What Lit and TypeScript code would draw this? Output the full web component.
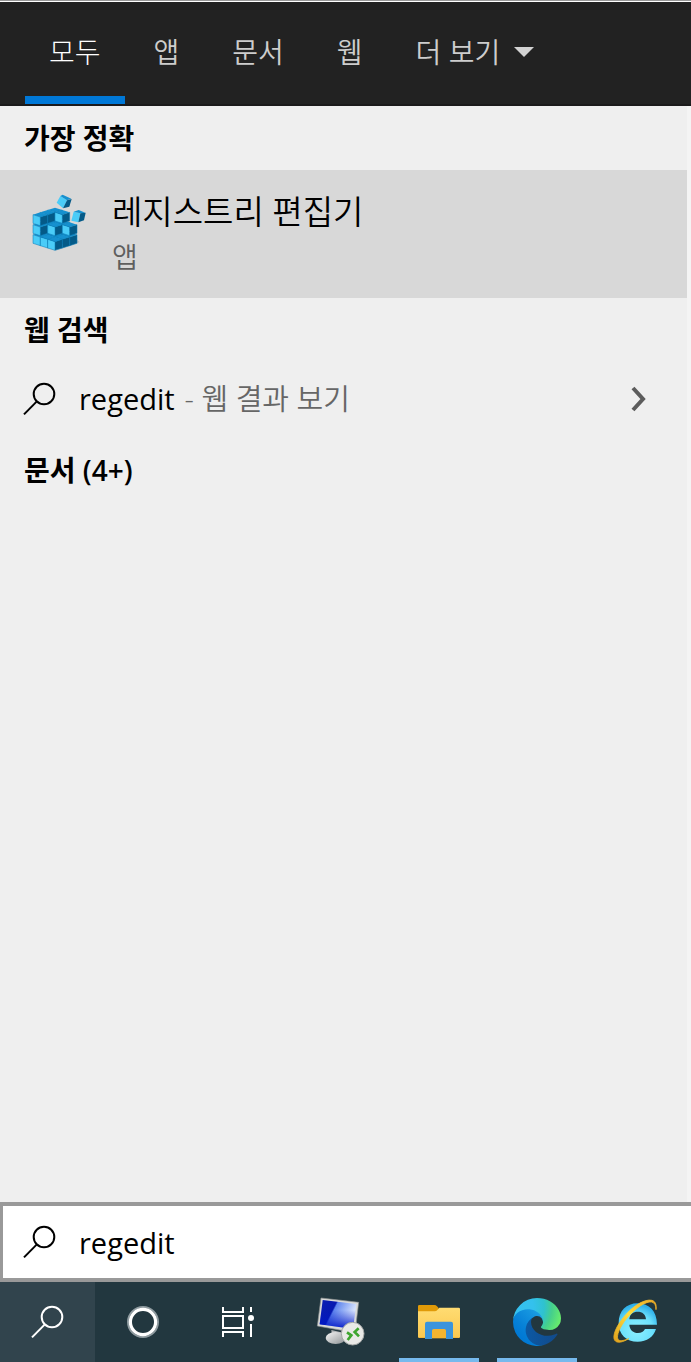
import { LitElement, html, svg, css } from "lit";
import { customElement, state } from "lit/decorators.js";
import { classMap } from "lit/directives/class-map.js";

const searchIcon = html`<svg class="search-icon" viewBox="0 0 34 34" width="34" height="34" aria-hidden="true">
  <circle cx="21" cy="12" r="10.3" /><path d="M13.6 19.6 1 32.4" />
</svg>`;

// One isometric cube; (x, y) is its lowest front corner.
const cube = (x: number, y: number) => svg`
  <path fill="#4accf8" d="M${x} ${y}v-26l-22-7v26z" />
  <path fill="#045a88" d="M${x} ${y}v-26l22-7v26z" />
  <path fill="#1590cf" d="M${x} ${y - 26}l-22-7 22-7 22 7z" />
  <path fill="none" stroke="#0b7db8" stroke-width="1.6" d="M${x - 22} ${y - 33}v26l22 7 22-7v-26M${x - 22} ${y - 33}l22 7 22-7M${x} ${y - 26}v26" />`;

// Height of each stack, back to front.
const stacks = [
  [3, 3, 3],
  [3, 2, 1],
  [2, 1, 1],
];

function cubes() {
  const out = [];
  for (let k = 0; k < 3; k++)
    for (let i = 0; i < 3; i++)
      for (let j = 0; j < 3; j++)
        if (stacks[i][j] > k) out.push(cube(105 + (i - j) * 22, 196 - (4 - i - j) * 7 - k * 30));
  return out;
}

const registryIcon = html`<svg class="app-icon" viewBox="30 24 180 180" width="60" height="60" aria-hidden="true">
  <path fill="#bdbdbd" d="M106 197l66-22 6-4-8-8z" />
  ${cubes()}
  <path fill="#4accf8" d="M121 33 141 46 129 70 110 53z" />
  <path fill="#1590cf" d="M121 33 128 29 154 41 141 46z" />
  <path fill="#045a88" d="M141 46 155 42 148 65 129 70z" />
  <path fill="#4accf8" d="M161 80 181 85 175 112 154 107z" />
  <path fill="#1590cf" d="M161 80 176 75 196 83 181 85z" />
  <path fill="#045a88" d="M181 85 197 83 192 106 175 112z" />
</svg>`;

const cortanaIcon = html`<svg viewBox="0 0 34 34" width="34" height="34" aria-hidden="true">
  <circle cx="17" cy="17" r="15" fill="none" stroke="#8f9ba0" stroke-width="2" />
  <circle cx="17" cy="17" r="12.6" fill="none" stroke="#fff" stroke-width="3.2" />
</svg>`;

const taskViewIcon = html`<svg viewBox="0 0 34 34" width="34" height="34" aria-hidden="true">
  <g fill="none" stroke="#fff" stroke-width="2">
    <path d="M2 2v5h20V2M2 32v-5h20v5M2 11h20v12H2zM30 2v5M30 19v13" />
  </g>
  <circle cx="30" cy="13" r="3" fill="#fff" />
</svg>`;

const remoteIcon = html`<svg viewBox="75 48 156 156" width="52" height="52" aria-hidden="true">
  <defs>
    <linearGradient id="scr" x1="0" y1="0" x2="1" y2="0.4">
      <stop offset="0" stop-color="#0a1fb4" /><stop offset="0.42" stop-color="#0619b0" />
      <stop offset="0.46" stop-color="#5f86ee" /><stop offset="1" stop-color="#e4edff" />
    </linearGradient>
    <linearGradient id="scr2" x1="0" y1="0" x2="0" y2="1">
      <stop offset="0.35" stop-color="#0018c8" stop-opacity="0" /><stop offset="1" stop-color="#0018c8" />
    </linearGradient>
    <linearGradient id="base" x1="0" y1="0" x2="1" y2="1">
      <stop offset="0" stop-color="#f6f6f6" /><stop offset="1" stop-color="#8d9294" />
    </linearGradient>
  </defs>
  <path fill="#b5b8ba" d="M124 150 160 158 158 176 126 168z" />
  <ellipse cx="137" cy="174" rx="30" ry="18" fill="url(#base)" />
  <path fill="#d9dad8" stroke="#8b8f90" stroke-width="2" d="M93 54 206 67 195 158 82 138z" />
  <path fill="url(#scr)" d="M98 60 199 72 189 147 89 133z" />
  <path fill="url(#scr2)" d="M98 60 199 72 189 147 89 133z" />
  <circle cx="188" cy="161" r="34" fill="#e9e9e7" stroke="#a2a5a4" stroke-width="3" />
  <g fill="none" stroke="#3ea52f" stroke-width="8">
    <path d="M171 157 184 166 173 180M206 145 194 156 207 169" />
  </g>
</svg>`;

const explorerIcon = html`<svg viewBox="369 48 156 156" width="52" height="52" aria-hidden="true">
  <defs>
    <linearGradient id="fold" x1="0" y1="0" x2="0" y2="1">
      <stop offset="0" stop-color="#ffdc72" /><stop offset="1" stop-color="#fbc850" />
    </linearGradient>
  </defs>
  <path fill="#e09a08" d="M384 79q0-4 4-4h45q5 0 8 4l5 5v20h-62z" />
  <path fill="url(#fold)" d="M384 94h50q5 0 8-4l6-7h58q4 0 4 4v83q0 4-4 4H388q-4 0-4-4z" />
  <path fill="#f7b93a" d="M388 171h118v3H388z" />
  <path fill="#f4b42f" d="M426 147h42v28h-42z" />
  <path fill="#3b94dc" d="M405 131q0-6 6-6h72q6 0 6 6v46h-21v-25q0-5-5-5h-32q-5 0-5 5v25h-21z" />
</svg>`;

const edgeIcon = html`<svg viewBox="0 0 256 256" width="48" height="48" aria-hidden="true">
  <defs>
    <linearGradient id="e1" gradientUnits="userSpaceOnUse" x1="64" y1="177" x2="241" y2="177">
      <stop offset="0" stop-color="#0c59a4" /><stop offset="1" stop-color="#114a8b" />
    </linearGradient>
    <linearGradient id="e2" gradientUnits="userSpaceOnUse" x1="157" y1="100" x2="46" y2="222">
      <stop offset="0" stop-color="#1b9de2" /><stop offset="0.16" stop-color="#1595df" />
      <stop offset="0.67" stop-color="#0680d7" /><stop offset="1" stop-color="#0078d4" />
    </linearGradient>
    <radialGradient id="e3" gradientUnits="userSpaceOnUse" cx="30" cy="50" r="235">
      <stop offset="0" stop-color="#35c1f1" /><stop offset="0.35" stop-color="#34c1ed" />
      <stop offset="0.6" stop-color="#2fc2cf" /><stop offset="0.78" stop-color="#45cf8c" />
      <stop offset="1" stop-color="#66eb6e" />
    </radialGradient>
  </defs>
  <g transform="translate(-4.63 -4.92)">
    <path fill="url(#e1)" d="M235.68 195.46a93.73 93.73 0 01-10.54 4.71 101.87 101.87 0 01-35.9 6.46c-47.32 0-88.54-32.55-88.54-74.32A31.48 31.48 0 01117.13 105c-42.8 1.8-53.8 46.4-53.8 72.53 0 73.88 68.09 81.37 82.76 81.37 7.91 0 19.84-2.3 27-4.56l1.31-.44a128.34 128.34 0 0066.6-52.8 4 4 0 00-5.32-5.64z" />
    <path fill="url(#e2)" d="M110.34 246.34A79.2 79.2 0 0187.6 225a80.72 80.72 0 0129.53-120c3.12-1.47 8.45-4.13 15.54-4a32.35 32.35 0 0125.69 13 31.88 31.88 0 016.36 18.66c0-.21 24.46-79.6-80-79.6-43.9 0-80 41.66-80 78.21a130.15 130.15 0 0012.11 56 128 128 0 00156.38 67.11 75.55 75.55 0 01-62.78-8z" />
    <path fill="url(#e3)" d="M156.94 153.78c-.81 1.05-3.3 2.5-3.3 5.66 0 2.61 1.7 5.12 4.72 7.23 14.38 10 41.49 8.68 41.56 8.68a59.56 59.56 0 0030.27-8.35 61.38 61.38 0 0030.43-52.88c.26-22.41-8-37.31-11.34-43.91-21.19-41.45-66.93-65.29-116.67-65.29A128 128 0 004.63 131.05c.48-36.54 36.8-66.05 80-66.05 3.5 0 23.46.34 42 10.07 16.34 8.58 24.9 18.94 30.85 29.21 6.18 10.67 7.28 24.15 7.28 29.52s-2.74 13.33-7.82 19.98z" />
  </g>
</svg>`;

const ieIcon = html`<svg viewBox="357 78 156 156" width="52" height="52" aria-hidden="true">
  <defs>
    <radialGradient id="i1" gradientUnits="userSpaceOnUse" cx="440" cy="180" r="75">
      <stop offset="0" stop-color="#8df0ff" /><stop offset="0.65" stop-color="#6be0fc" />
      <stop offset="1" stop-color="#2fb0ea" />
    </radialGradient>
    <linearGradient id="i2" gradientUnits="userSpaceOnUse" x1="372" y1="215" x2="498" y2="92">
      <stop offset="0" stop-color="#e0a01c" /><stop offset="0.5" stop-color="#ffdc3c" />
      <stop offset="1" stop-color="#eaa924" />
    </linearGradient>
  </defs>
  <path fill="url(#i1)" fill-rule="evenodd" d="M501 164H418c1 16 12 25 26 25 10 0 17-4 21-12h33c-7 24-27 38-55 38-34 0-57-22-57-57s23-58 57-58 58 23 58 64zM418 148h50c-1-15-11-23-25-23s-24 8-25 23z" />
  <path fill="url(#i2)" stroke="url(#i2)" stroke-width="2.5" d="M498 119c2-14-1-24-12-28-22-5-56 16-82 47-25 29-38 60-30 73 7 10 24 6 42-5-16 7-28 8-32 2-6-10 5-37 27-64 25-30 57-51 74-48 9 2 13 10 13 23z" />
</svg>`;

@customElement("app-root")
export class AppRoot extends LitElement {
  @state() private tab = 0;
  @state() private query = "regedit";

  static styles = css`
    :host {
      display: flex;
      flex-direction: column;
      min-height: 100vh;
      background: #efefef;
      color: #000;
      font-family: "Open Sans", "Noto Sans CJK KR", sans-serif;
      font-size: 28px;
      line-height: 36px;
    }
    * { box-sizing: border-box; }
    svg { display: block; flex: none; }
    button {
      margin: 0;
      padding: 0;
      border: 0;
      background: none;
      color: inherit;
      font: inherit;
      text-align: left;
    }
    .tabs {
      display: flex;
      gap: 5px;
      height: 106px;
      padding: 0 25px;
      border-top: 1px solid #999;
      border-bottom: 2px solid #1b1a1b;
      background: #222;
      box-shadow: inset 0 1px #fff;
    }
    .tab {
      display: flex;
      align-items: center;
      gap: 14px;
      padding: 6px 24px 0;
      border-bottom: 8px solid transparent;
      color: #cdcdcd;
      font-weight: 350;
      white-space: nowrap;
    }
    .tab.active { border-color: #0078d7; color: #fff; font-weight: 300; }
    .results {
      flex: 1;
      border-right: 4px solid #f4f4f4;
    }
    h2 {
      margin: 0;
      padding: 14px 24px;
      font-size: 28px;
      line-height: 36px;
      font-weight: 600;
    }
    .best {
      display: flex;
      width: 100%;
      gap: 22px;
      height: 128px;
      padding: 23px 30px 0;
      background: #d8d8d8;
    }
    .lines { display: flex; flex-direction: column; gap: 8px; }
    .title { font-size: 33px; line-height: 38px; font-weight: 350; }
    .kind { color: #5f5f5f; font-weight: 350; }
    .web {
      display: flex;
      align-items: center;
      width: 100%;
      gap: 22px;
      height: 76px;
      padding: 0 38px 2px 23px;
      font-size: 29px;
    }
    .search-icon { fill: none; stroke: currentColor; stroke-width: 2; }
    .label { display: flex; flex: 1; gap: 10px; }
    .hint { color: #666; font-weight: 350; }
    .box {
      display: flex;
      align-items: center;
      gap: 22px;
      height: 80px;
      padding: 0 20px;
      border: solid #999;
      border-width: 4px 0 4px 3px;
      background: #fff;
    }
    .box input {
      flex: 1;
      min-width: 0;
      padding: 2px 0 0;
      border: 0;
      outline: 0;
      background: none;
      color: #000;
      font: inherit;
      font-size: 29px;
    }
    .taskbar { display: flex; height: 80px; background: #22373f; color: #fff; }
    .task {
      display: flex;
      align-items: center;
      justify-content: center;
      width: 95px;
    }
    .task.active { background: #31444d; }
    .apps { display: flex; gap: 18px; padding-left: 16px; }
    .app {
      display: flex;
      align-items: center;
      justify-content: center;
      width: 80px;
      border: solid transparent;
      border-width: 4px 0;
    }
    .app.running { border-bottom-color: #76b9ed; }
  `;

  render() {
    const tabs = ["모두", "앱", "문서", "웹", "더 보기"];
    return html`
      <nav class="tabs">
        ${tabs.map(
          (t, i) => html`<button class=${classMap({ tab: true, active: this.tab === i })} @click=${() => (this.tab = i)}>
            ${t}${i === 4
              ? html`<svg viewBox="0 0 20 10" width="20" height="10" aria-hidden="true"><path fill="#d2d2d2" d="M0 0h20L10 10z" /></svg>`
              : ""}
          </button>`
        )}
      </nav>
      <main class="results">
        <h2>가장 정확</h2>
        <button class="best">
          ${registryIcon}
          <span class="lines"><span class="title">레지스트리 편집기</span><span class="kind">앱</span></span>
        </button>
        <h2>웹 검색</h2>
        <button class="web">
          ${searchIcon}
          <span class="label"><span>regedit</span><span class="hint">- 웹 결과 보기</span></span>
          <svg viewBox="0 0 20 26" width="20" height="26" aria-hidden="true">
            <path fill="none" stroke="#5c5c5c" stroke-width="4" d="M4 2l10 11L4 24" />
          </svg>
        </button>
        <h2>문서 (4+)</h2>
      </main>
      <label class="box">
        ${searchIcon}
        <input
          type="text"
          aria-label="검색"
          .value=${this.query}
          @input=${(e: Event) => (this.query = (e.target as HTMLInputElement).value)}
        />
      </label>
      <footer class="taskbar">
        <button class="task active" aria-label="검색">${searchIcon}</button>
        <button class="task" aria-label="Cortana">${cortanaIcon}</button>
        <button class="task" aria-label="작업 보기">${taskViewIcon}</button>
        <div class="apps">
          <button class="app" aria-label="원격 데스크톱">${remoteIcon}</button>
          <button class="app running" aria-label="파일 탐색기">${explorerIcon}</button>
          <button class="app running" aria-label="Microsoft Edge">${edgeIcon}</button>
          <button class="app" aria-label="Internet Explorer">${ieIcon}</button>
        </div>
      </footer>
    `;
  }
}
